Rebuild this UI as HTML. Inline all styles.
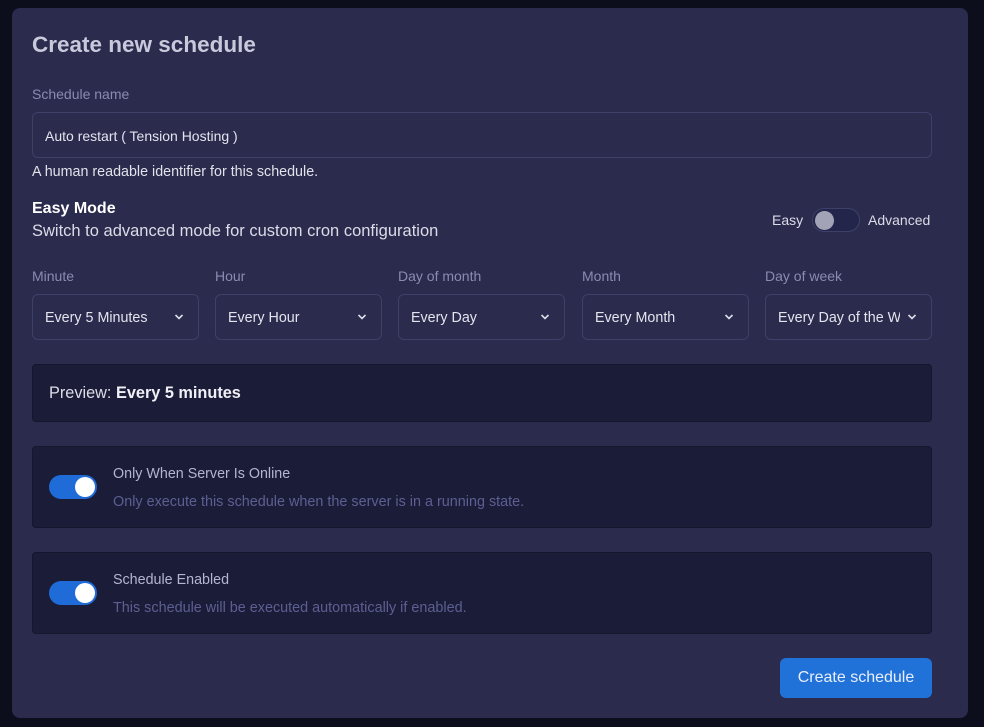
<!DOCTYPE html>
<html><head><style>
*{box-sizing:border-box;margin:0;padding:0}
body{width:984px;height:727px;background:#0d0e1c;font-family:"Liberation Sans",Arial,sans-serif;position:relative;overflow:hidden}
.panel{position:absolute;left:12px;top:8px;width:956px;height:710px;background:#2a2b4d;border-radius:8px}
.a{position:absolute;white-space:nowrap}
.inp{position:absolute;border:1px solid #3f4068;border-radius:6px;background:#2a2b4d;color:#e4e4ee;font-size:14px}
.sel{top:294px;width:167px;height:46px;padding:15px 0 0 12px;font-size:14.3px}
.sel svg{position:absolute;right:14px;top:18px}
.lbl{font-size:14px;color:#8a8bb0;top:268px}
.card{position:absolute;left:32px;width:900px;background:#1b1c38;border:1px solid #15162c;border-radius:4px}
.tg{position:absolute;left:16px;width:48px;height:24px;border-radius:12px;background:#1f6bd8}
.tg i{position:absolute;right:2px;top:2px;width:20px;height:20px;border-radius:50%;background:#fff}
.ct{position:absolute;left:80px;font-size:14.3px;color:#b4b5d0}
.cd{position:absolute;left:80px;font-size:14.4px;color:#5d5f92}
</style></head><body>
<div class="panel"></div>
<div class="a" style="left:32px;top:32px;font-size:22.5px;font-weight:bold;color:#c9c9dc">Create new schedule</div>
<div class="a" style="left:32px;top:86px;font-size:14px;color:#8a8bb0">Schedule name</div>
<div class="inp" style="left:32px;top:112px;width:900px;height:46px;padding:15px 0 0 12px">Auto restart ( Tension Hosting )</div>
<div class="a" style="left:32px;top:164px;font-size:14.3px;color:#e2e2ea">A human readable identifier for this schedule.</div>
<div class="a" style="left:32px;top:200px;font-size:16px;font-weight:bold;color:#fff">Easy Mode</div>
<div class="a" style="left:32px;top:222px;font-size:16.5px;color:#dcdce8">Switch to advanced mode for custom cron configuration</div>
<div class="a" style="left:772px;top:212px;font-size:14px;color:#dcdce8">Easy</div>
<div class="a" style="left:812px;top:208px;width:48px;height:24px;border:1px solid #3f4068;border-radius:12px;background:#24254a"><i style="position:absolute;left:2px;top:2px;width:19px;height:19px;border-radius:50%;background:#a3a3b8"></i></div>
<div class="a" style="left:868px;top:212px;font-size:14px;color:#dcdce8">Advanced</div>

<div class="a lbl" style="left:32px">Minute</div>
<div class="a lbl" style="left:215px">Hour</div>
<div class="a lbl" style="left:398px">Day of month</div>
<div class="a lbl" style="left:582px">Month</div>
<div class="a lbl" style="left:765px">Day of week</div>
<div class="inp sel" style="left:32px">Every 5 Minutes<svg width="10" height="8" viewBox="0 0 10 8"><path d="M1.5 2l3.5 3.5 3.5-3.5" fill="none" stroke="#dcdce8" stroke-width="1.6"/></svg></div>
<div class="inp sel" style="left:215px">Every Hour<svg width="10" height="8" viewBox="0 0 10 8"><path d="M1.5 2l3.5 3.5 3.5-3.5" fill="none" stroke="#dcdce8" stroke-width="1.6"/></svg></div>
<div class="inp sel" style="left:398px">Every Day<svg width="10" height="8" viewBox="0 0 10 8"><path d="M1.5 2l3.5 3.5 3.5-3.5" fill="none" stroke="#dcdce8" stroke-width="1.6"/></svg></div>
<div class="inp sel" style="left:582px">Every Month<svg width="10" height="8" viewBox="0 0 10 8"><path d="M1.5 2l3.5 3.5 3.5-3.5" fill="none" stroke="#dcdce8" stroke-width="1.6"/></svg></div>
<div class="inp sel" style="left:765px;overflow:hidden"><span style="display:inline-block;width:122px;overflow:hidden;white-space:nowrap;vertical-align:top">Every Day of the Week</span><svg width="10" height="8" viewBox="0 0 10 8"><path d="M1.5 2l3.5 3.5 3.5-3.5" fill="none" stroke="#dcdce8" stroke-width="1.6"/></svg></div>

<div class="card" style="top:364px;height:58px"><div class="a" style="left:16px;top:19px;font-size:16.3px;color:#dcdce8">Preview: <b style="color:#f0f0f6">Every 5 minutes</b></div></div>

<div class="card" style="top:446px;height:82px"><div class="tg" style="top:28px"><i></i></div>
<div class="ct" style="top:19px">Only When Server Is Online</div>
<div class="cd" style="top:47px">Only execute this schedule when the server is in a running state.</div></div>

<div class="card" style="top:552px;height:82px"><div class="tg" style="top:28px"><i></i></div>
<div class="ct" style="top:19px">Schedule Enabled</div>
<div class="cd" style="top:47px">This schedule will be executed automatically if enabled.</div></div>

<div class="a" style="left:780px;top:658px;width:152px;height:40px;border-radius:6px;background:#2172d8;color:#e8eefa;font-size:16px;text-align:center;line-height:40px">Create schedule</div>
</body></html>
